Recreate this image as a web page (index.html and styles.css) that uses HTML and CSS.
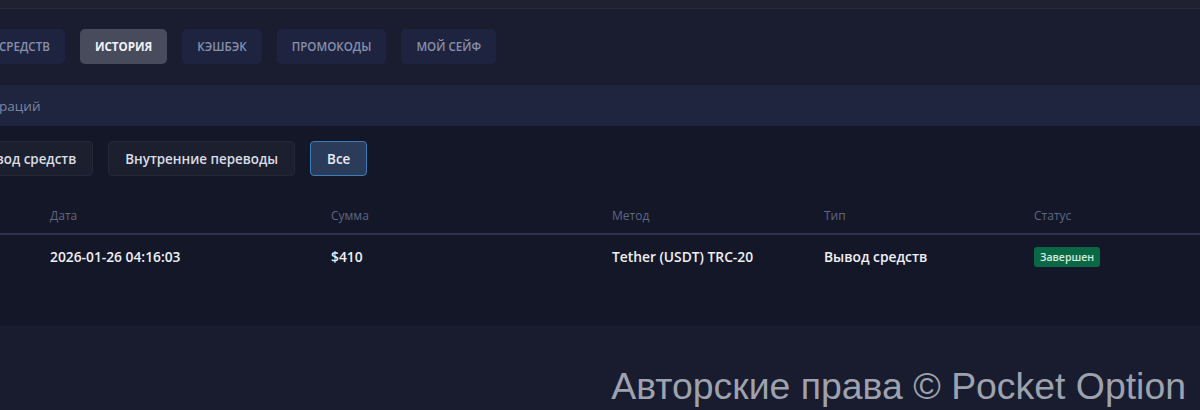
FILE: index.html
```html
<!DOCTYPE html>
<html lang="ru">
<head>
<meta charset="utf-8">
<title>История</title>
<link rel="stylesheet" href="styles.css">
</head>
<body>
<div class="topbar"></div>
<nav class="tabs">
  <div class="tab tab-first">Вывод средств</div>
  <div class="tab tab-active">История</div>
  <div class="tab">Кэшбэк</div>
  <div class="tab">Промокоды</div>
  <div class="tab">Мой сейф</div>
</nav>
<div class="section-head"><span class="section-title">История операций</span></div>
<section class="history">
  <div class="filters">
    <button class="filter filter-first">Вывод средств</button>
    <button class="filter">Внутренние переводы</button>
    <button class="filter filter-active">Все</button>
  </div>
  <div class="table">
    <div class="trow thead">
      <div>Дата</div>
      <div>Сумма</div>
      <div>Метод</div>
      <div>Тип</div>
      <div>Статус</div>
    </div>
    <div class="trow tbody">
      <div>2026-01-26 04:16:03</div>
      <div>$410</div>
      <div>Tether (USDT) TRC-20</div>
      <div>Вывод средств</div>
      <div><span class="badge">Завершен</span></div>
    </div>
  </div>
</section>
<footer class="footer">
  <span class="watermark">Авторские права © Pocket Option</span>
</footer>
</body>
</html>
```

FILE: styles.css
```css
* { box-sizing: border-box; }
html, body {
  margin: 0;
  padding: 0;
}
body {
  width: 1200px;
  height: 410px;
  overflow: hidden;
  background: #181c2e;
  font-family: "Open Sans", "Noto Sans", sans-serif;
}
.topbar {
  height: 9px;
  background: #1f2130;
  border-bottom: 1px solid #262b3c;
}
.tabs {
  height: 76px;
  background: #1a1d2f;
  display: flex;
  gap: 15px;
  padding-top: 20px;
  white-space: nowrap;
}
.tab {
  height: 35px;
  padding: 0 15px;
  border-radius: 5px;
  background: #1e2440;
  color: #8890ab;
  font-size: 11.6px;
  font-weight: 600;
  text-transform: uppercase;
  display: flex;
  align-items: center;
  flex: none;
}
.tab-first { margin-left: -62px; }
.tab-active {
  background: #484b5c;
  color: #f2f3f7;
  font-weight: 700;
}
.section-head {
  height: 41px;
  background: #20253f;
  display: flex;
  align-items: center;
  white-space: nowrap;
}
.section-title {
  margin-left: -84px;
  font-size: 13.5px;
  color: #7b84a4;
}
.history {
  height: 200px;
  background: #141727;
  padding-top: 15px;
}
.filters {
  display: flex;
  gap: 15px;
  white-space: nowrap;
}
.filter {
  height: 35px;
  padding: 0 16px;
  border-radius: 4px;
  border: 1px solid #232839;
  background: #1b1f2e;
  color: #dadde6;
  font-family: inherit;
  font-size: 13.4px;
  font-weight: 600;
  flex: none;
}
.filter-first { margin-left: -41px; }
.filter-active {
  background: #2b3c5b;
  border-color: #3b7cbb;
  color: #e6ebf4;
}
.table {
  margin-top: 28px;
}
.trow {
  display: grid;
  grid-template-columns: 281px 281px 212px 210px 1fr;
  padding-left: 50px;
  align-items: center;
}
.thead {
  height: 31px;
  align-items: start;
  padding-top: 3px;
  font-size: 12px;
  color: #5f6784;
  border-bottom: 2px solid #2c3150;
}
.tbody {
  height: 42px;
  font-size: 13.8px;
  font-weight: 600;
  color: #eef0f5;
}
.badge {
  display: inline-flex;
  align-items: center;
  height: 20px;
  padding: 0 6px;
  border-radius: 3px;
  background: #0a6944;
  color: #d4ece0;
  font-size: 10.5px;
  font-weight: 600;
}
.footer {
  height: 85px;
  background: #181c2e;
  display: flex;
  justify-content: flex-end;
  align-items: flex-end;
  padding: 0 14px 5px 0;
}
.watermark {
  font-family: "Liberation Sans", Arial, sans-serif;
  font-size: 37.4px;
  line-height: 40px;
  color: #9ea2af;
  white-space: nowrap;
}
```
